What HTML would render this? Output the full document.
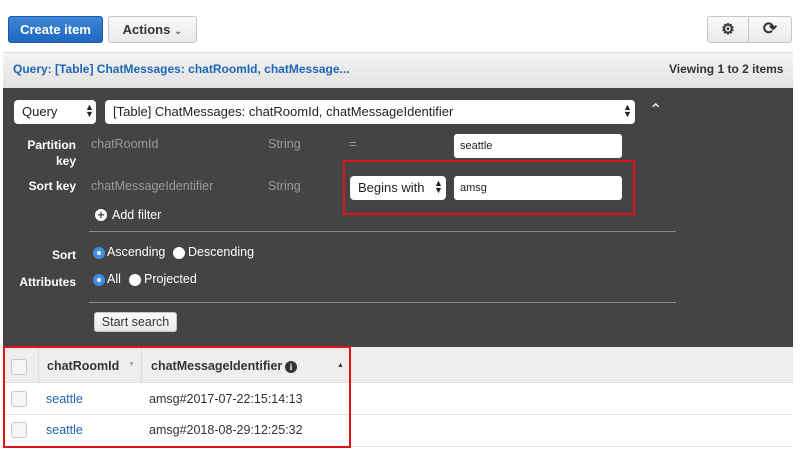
<!DOCTYPE html>
<html><head><style>
body{margin:0;width:800px;height:468px;background:#fff;font-family:"Liberation Sans",Arial,sans-serif;position:relative;overflow:hidden}
div,span{position:absolute;box-sizing:border-box}
.btn{border:1px solid #c6c6c6;border-radius:3px;background:linear-gradient(#fafafa,#e9e9e9);font-size:13px;font-weight:bold;color:#333;text-align:center}
.lbl{color:#fff;font-weight:bold;font-size:12px;text-align:right}
.g{color:#9a9a9a;font-size:12.5px}
.inp{background:#fff;border-radius:3px;font-size:11px;color:#222;padding-left:6px}
.sel{background:#fff;border-radius:4px;font-size:13px;color:#222;padding-left:8px}
.w{color:#fff;font-size:12.5px}
.rad{width:12px;height:12px;border-radius:50%;background:#fff}
.radon{background:#3e8de0}
.radon::after{content:"";position:absolute;left:4px;top:4px;width:4px;height:4px;border-radius:50%;background:#fff}
.cb{width:16px;height:16px;border:1px solid #c8c8c8;border-radius:3px;background:#f5f5f5}
</style></head><body>
<div class="btn" style="left:8px;top:16px;width:95px;height:27px;line-height:25px;background:linear-gradient(#3d87d6,#1f67bf);border-color:#1a5aa8;color:#fff">Create item</div>
<div class="btn" style="left:108px;top:16px;width:89px;height:27px;line-height:25px">Actions <span style="position:static;font-weight:normal;font-size:10px">&#8964;</span></div>
<div class="btn" style="left:707px;top:16px;width:42px;height:27px;border-radius:3px 0 0 3px;line-height:25px;font-size:15px">&#9881;</div>
<div class="btn" style="left:748px;top:16px;width:44px;height:27px;border-radius:0 3px 3px 0;line-height:24px;font-size:17px">&#10227;</div>
<div style="left:3px;top:52px;width:790px;height:36px;background:linear-gradient(#f4f4f4,#e2e2e2);border-top:1px solid #ddd"></div>
<div style="left:13px;top:62px;font-size:12px;font-weight:bold;color:#1f65b5">Query: [Table] ChatMessages: chatRoomId, chatMessage...</div>
<div style="left:669px;top:62px;font-size:12px;font-weight:bold;color:#333">Viewing 1 to 2 items</div>
<div style="left:3px;top:88px;width:790px;height:259px;background:#444"></div>
<div class="sel" style="left:14px;top:100px;width:82px;height:24px;line-height:24px">Query</div>
<div class="sel" style="left:105px;top:100px;width:530px;height:24px;line-height:24px">[Table] ChatMessages: chatRoomId, chatMessageIdentifier</div>
<div style="left:623px;top:104px;color:#222;font-size:9px;line-height:7px">▲<br>▼</div>
<div style="left:85px;top:104px;color:#222;font-size:9px;line-height:7px">▲<br>▼</div>
<div style="left:649px;top:100px;color:#fff;font-size:16px">&#8963;</div>
<div class="lbl" style="left:10px;top:137px;width:66px;line-height:16px">Partition<br>key</div>
<div class="g" style="left:91px;top:137px">chatRoomId</div>
<div class="g" style="left:268px;top:137px">String</div>
<div class="g" style="left:349px;top:137px">=</div>
<div class="inp" style="left:454px;top:134px;width:168px;height:24px;line-height:24px">seattle</div>
<div class="lbl" style="left:10px;top:179px;width:66px">Sort key</div>
<div class="g" style="left:91px;top:179px">chatMessageIdentifier</div>
<div class="g" style="left:268px;top:179px">String</div>
<div style="left:343px;top:160px;width:292px;height:55px;border:2px solid #e0131b"></div>
<div class="sel" style="left:350px;top:176px;width:96px;height:24px;line-height:24px">Begins with</div>
<div style="left:434px;top:180px;color:#222;font-size:9px;line-height:7px">▲<br>▼</div>
<div class="inp" style="left:454px;top:176px;width:168px;height:24px;line-height:24px">amsg</div>
<div style="left:95px;top:209px;width:12px;height:12px;border-radius:50%;background:#fff;color:#444;font-size:12px;font-weight:bold;line-height:12px;text-align:center">+</div>
<div class="w" style="left:112px;top:208px">Add filter</div>
<div style="left:89px;top:231px;width:587px;height:1px;background:#888"></div>
<div class="lbl" style="left:10px;top:248px;width:66px">Sort</div>
<div class="rad radon" style="left:93px;top:247px"></div><div class="w" style="left:107px;top:245px">Ascending</div>
<div class="rad" style="left:173px;top:247px"></div><div class="w" style="left:188px;top:245px">Descending</div>
<div class="lbl" style="left:10px;top:275px;width:66px">Attributes</div>
<div class="rad radon" style="left:93px;top:274px"></div><div class="w" style="left:107px;top:272px">All</div>
<div class="rad" style="left:129px;top:274px"></div><div class="w" style="left:144px;top:272px">Projected</div>
<div style="left:89px;top:302px;width:587px;height:1px;background:#888"></div>
<div class="btn" style="left:94px;top:312px;width:83px;height:20px;line-height:18px;font-weight:normal;font-size:12.5px">Start search</div>
<div style="left:3px;top:347px;width:790px;height:36px;background:#eeeeee;border-bottom:1px solid #ddd"></div>
<div style="left:38px;top:348px;width:1px;height:34px;background:#ddd"></div>
<div style="left:141px;top:348px;width:1px;height:34px;background:#ddd"></div>
<div style="left:349px;top:348px;width:1px;height:34px;background:#ddd"></div>
<div class="cb" style="left:11px;top:359px"></div>
<div style="left:47px;top:359px;font-size:12.5px;font-weight:bold;color:#333">chatRoomId</div>
<div style="left:128px;top:361px;font-size:7px;color:#aaa">▼</div>
<div style="left:151px;top:359px;font-size:12.5px;font-weight:bold;color:#333">chatMessageIdentifier</div>
<div style="left:285px;top:361px;width:12px;height:12px;border-radius:50%;background:#333;color:#fff;font-size:9px;font-weight:bold;text-align:center;line-height:12px;font-family:'Liberation Serif',serif">i</div>
<div style="left:337px;top:362px;font-size:7px;color:#333">▲</div>
<div style="left:3px;top:414px;width:790px;height:1px;background:#e2e2e2"></div>
<div style="left:3px;top:446px;width:790px;height:1px;background:#e2e2e2"></div>
<div class="cb" style="left:11px;top:391px"></div>
<div style="left:46px;top:392px;font-size:12.5px;color:#1f65b5">seattle</div>
<div style="left:149px;top:392px;font-size:12.5px;color:#333">amsg#2017-07-22:15:14:13</div>
<div class="cb" style="left:11px;top:422px"></div>
<div style="left:46px;top:423px;font-size:12.5px;color:#1f65b5">seattle</div>
<div style="left:149px;top:423px;font-size:12.5px;color:#333">amsg#2018-08-29:12:25:32</div>
<div style="left:3px;top:346px;width:348px;height:102px;border:2px solid #e0131b"></div>
</body></html>
